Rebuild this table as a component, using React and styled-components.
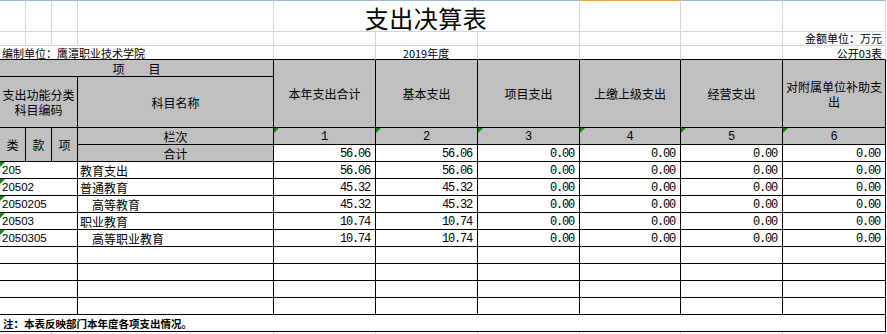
import React from "react";
import styled, { createGlobalStyle } from "styled-components";

const GlobalStyle = createGlobalStyle`
  html, body {
    margin: 0;
    padding: 0;
    background: #fff;
  }
  body {
    font-family: "Noto Sans CJK SC", "Noto Sans", sans-serif;
    color: #000;
  }
`;

const GRID = "#d0d7e5";
const INK = "#000";
const GRAY = "#c0c0c0";

const Sheet = styled.div`
  display: grid;
  grid-template-columns: 26px 26px 26px 196px 102px 102px 102px 101px 102px 103px 1px;
  grid-template-rows: 32px 14px 14px 17px 51px repeat(12, 17px) 3px;
  width: 887px;
  height: 334px;
  overflow: hidden;
`;

const Base = styled.div`
  grid-column: ${(p) => p.$col};
  grid-row: ${(p) => p.$row};
  position: relative;
  box-sizing: border-box;
  display: flex;
  align-items: center;
  justify-content: ${(p) =>
    p.$align === "left" ? "flex-start" : p.$align === "right" ? "flex-end" : "center"};
  text-align: center;
  white-space: nowrap;
  min-width: 0;
`;

const GridCell = styled(Base)`
  border-right: 1px solid ${GRID};
  border-bottom: 1px solid ${(p) => (p.$edge ? INK : GRID)};
  font-size: 11px;
  line-height: 11px;
  padding: 0 3px 0 2px;
  align-items: ${(p) => (p.$edge ? "flex-end" : "flex-start")};
  padding-top: ${(p) => (p.$edge ? "0" : "1px")};
`;

const TopCell = styled(GridCell)`
  border-top: 1px solid ${(p) => (p.$selected ? "#f2a03d" : "#a3b5ca")};
  align-items: flex-end;
  padding-top: 0;
`;

const Title = styled.h1`
  margin: 0;
  font-size: 24px;
  font-weight: 400;
  line-height: 26px;
  letter-spacing: 0.5px;
`;

const HeadCell = styled(Base)`
  background: ${GRAY};
  border-right: 1px solid ${INK};
  border-bottom: 1px solid ${INK};
  font-size: 12px;
  line-height: 15px;
  padding: 0 2px;
  white-space: normal;

  ${(p) =>
    p.$flag &&
    `&::before {
      content: "";
      position: absolute;
      top: 0;
      left: 0;
      border-top: 5px solid #0a8a0a;
      border-right: 5px solid transparent;
    }`}
`;

const IndexCell = styled(HeadCell)`
  font-family: "Liberation Mono", monospace;
  font-size: 12px;
  padding-top: 2px;
`;

const BodyCell = styled(Base)`
  background: #fff;
  border-right: 1px solid ${INK};
  border-bottom: 1px solid ${INK};
  font-size: 12px;
  line-height: 15px;
  padding: 0 4px 0 2px;

  ${(p) =>
    p.$flag &&
    `&::before {
      content: "";
      position: absolute;
      top: 0;
      left: 0;
      border-top: 5px solid #0a8a0a;
      border-right: 5px solid transparent;
    }`}
`;

const CodeCell = styled(BodyCell)`
  font-family: "Liberation Sans", Arial, sans-serif;
  font-size: 11.5px;
  padding-top: 1px;
`;

const NameCell = styled(BodyCell)`
  padding-left: ${(p) => (p.$indent ? "14px" : "2px")};
  padding-top: 1px;
`;

const ValueCell = styled(BodyCell)`
  font-family: "Liberation Mono", monospace;
  letter-spacing: -1.2px;
  padding-right: 5px;
  padding-top: 2px;
`;

const NoteCell = styled(BodyCell)`
  font-size: 10.5px;
  font-weight: 700;
  padding-left: 3px;
`;

const TailCell = styled(Base)`
  border-right: 1px solid ${GRID};
`;

const columns = [
  "本年支出合计",
  "基本支出",
  "项目支出",
  "上缴上级支出",
  "经营支出",
  "对附属单位补助支出",
];

const totals = [56.06, 56.06, 0, 0, 0, 0];

const rows = [
  { code: "205", name: "教育支出", values: [56.06, 56.06, 0, 0, 0, 0] },
  { code: "20502", name: "普通教育", values: [45.32, 45.32, 0, 0, 0, 0] },
  { code: "2050205", name: "高等教育", indent: true, values: [45.32, 45.32, 0, 0, 0, 0] },
  { code: "20503", name: "职业教育", values: [10.74, 10.74, 0, 0, 0, 0] },
  { code: "2050305", name: "高等职业教育", indent: true, values: [10.74, 10.74, 0, 0, 0, 0] },
];

const emptyRows = [13, 14, 15, 16];

export default function App() {
  return (
    <>
      <GlobalStyle />
      <Sheet>
        {/* title row */}
        <TopCell $col="1" $row="1" />
        <TopCell $col="2" $row="1" />
        <TopCell $col="3" $row="1" />
        <TopCell $col="4" $row="1" />
        <TopCell $col="5 / 8" $row="1">
          <Title>支出决算表</Title>
        </TopCell>
        <TopCell $col="8" $row="1" $selected />
        <TopCell $col="9" $row="1" />
        <TopCell $col="10" $row="1" />

        {/* unit row */}
        {[1, 2, 3, 4, 5, 6, 7, 8, 9].map((c) => (
          <GridCell key={c} $col={c} $row="2" />
        ))}
        <GridCell $col="10" $row="2" $align="right">
          金额单位：万元
        </GridCell>

        {/* org row */}
        <GridCell $col="1 / 5" $row="3" $align="left" $edge>
          编制单位：鹰潭职业技术学院
        </GridCell>
        <GridCell $col="5" $row="3" $edge />
        <GridCell $col="6" $row="3" $edge>
          2019年度
        </GridCell>
        <GridCell $col="7" $row="3" $edge />
        <GridCell $col="8" $row="3" $edge />
        <GridCell $col="9" $row="3" $edge />
        <GridCell $col="10" $row="3" $align="right" $edge>
          公开03表
        </GridCell>

        {/* header */}
        <HeadCell $col="1 / 5" $row="4">
          项{"\u3000\u3000"}目
        </HeadCell>
        {columns.map((title, i) => (
          <HeadCell key={title} $col={i + 5} $row="4 / 6">
            {title}
          </HeadCell>
        ))}
        <HeadCell $col="1 / 4" $row="5">
          支出功能分类科目编码
        </HeadCell>
        <HeadCell $col="4" $row="5">
          科目名称
        </HeadCell>
        <HeadCell $col="1" $row="6 / 8">
          类
        </HeadCell>
        <HeadCell $col="2" $row="6 / 8">
          款
        </HeadCell>
        <HeadCell $col="3" $row="6 / 8">
          项
        </HeadCell>
        <HeadCell $col="4" $row="6">
          栏次
        </HeadCell>
        {columns.map((title, i) => (
          <IndexCell key={title} $col={i + 5} $row="6" $flag>
            {i + 1}
          </IndexCell>
        ))}
        <HeadCell $col="4" $row="7">
          合计
        </HeadCell>
        {totals.map((v, i) => (
          <ValueCell key={i} $col={i + 5} $row="7" $align="right">
            {v.toFixed(2)}
          </ValueCell>
        ))}

        {/* data rows */}
        {rows.map((r, ri) => (
          <React.Fragment key={r.code}>
            <CodeCell $col="1 / 4" $row={ri + 8} $align="left" $flag>
              {r.code}
            </CodeCell>
            <NameCell $col="4" $row={ri + 8} $align="left" $indent={r.indent}>
              {r.name}
            </NameCell>
            {r.values.map((v, i) => (
              <ValueCell key={i} $col={i + 5} $row={ri + 8} $align="right">
                {v.toFixed(2)}
              </ValueCell>
            ))}
          </React.Fragment>
        ))}

        {/* empty rows */}
        {emptyRows.map((row) => (
          <React.Fragment key={row}>
            <BodyCell $col="1 / 4" $row={row} />
            {[4, 5, 6, 7, 8, 9, 10].map((c) => (
              <BodyCell key={c} $col={c} $row={row} />
            ))}
          </React.Fragment>
        ))}

        {/* note */}
        <NoteCell $col="1 / 11" $row="17" $align="left">
          注：本表反映部门本年度各项支出情况。
        </NoteCell>

        {[1, 2, 3, 4, 5, 6, 7, 8, 9, 10].map((c) => (
          <TailCell key={c} $col={c} $row="18" />
        ))}
      </Sheet>
    </>
  );
}
